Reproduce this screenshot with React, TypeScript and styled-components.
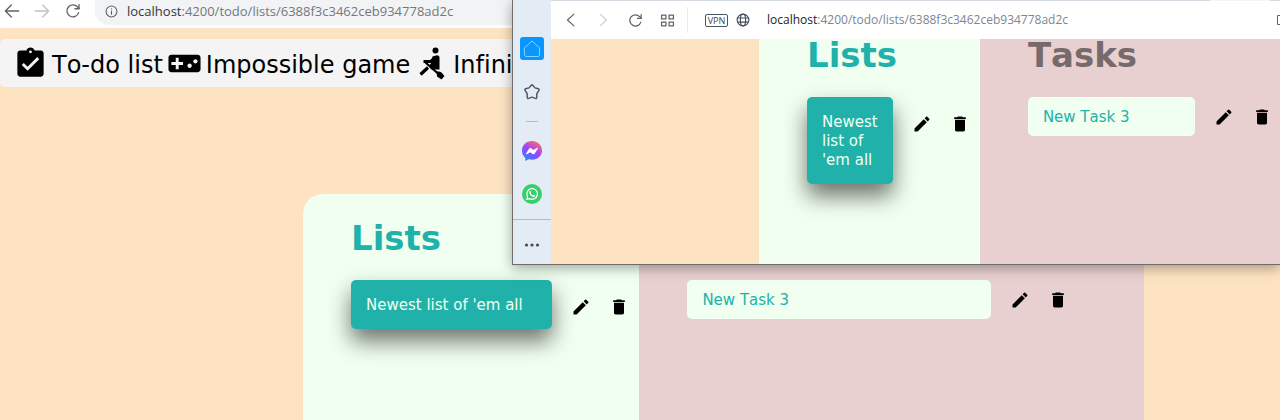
import React from "react";
import styled, { createGlobalStyle } from "styled-components";
import {
  MdAssignmentTurnedIn,
  MdDelete,
  MdEdit,
  MdVideogameAsset,
} from "react-icons/md";

const GlobalStyle = createGlobalStyle`
  *, *::before, *::after { box-sizing: border-box; }
  body {
    margin: 0;
    background: #fee3c3;
    font-family: "DejaVu Sans", Verdana, sans-serif;
    font-kerning: none;
    font-variant-ligatures: none;
  }
  button { border: 0; padding: 0; margin: 0; background: none; color: inherit; font: inherit; font-kerning: none; cursor: pointer; }
  svg { display: block; }
`;

const Desktop = styled.div`
  position: relative;
  min-height: 100vh;
  overflow: hidden;
  display: flex;
  flex-direction: column;
`;

const BackToolbar = styled.header`
  display: flex;
  align-items: flex-start;
  height: 28px;
  background: #fff;
`;

const BackControls = styled.div`
  display: flex;
  width: 95px;
  height: 22px;
  align-items: center;
`;

const ToolButton = styled.button<{ $w: number; $color?: string }>`
  display: flex;
  align-items: center;
  justify-content: center;
  flex: none;
  width: ${(p) => p.$w}px;
  height: 22px;
  color: ${(p) => p.$color ?? "#5f6368"};
`;

const BackAddress = styled.div`
  display: flex;
  flex: 1;
  align-items: center;
  gap: 9px;
  height: 25px;
  padding: 0 10px 3px;
  border-radius: 0 0 0 14px;
  background: #f1f3f4;
  color: #5f6368;
`;

const Url = styled.div<{ $size: number; $host: string; $path: string }>`
  font-family: "Open Sans", "Noto Sans", sans-serif;
  font-size: ${(p) => p.$size}px;
  line-height: 20px;
  white-space: nowrap;
  color: ${(p) => p.$path};
  span { color: ${(p) => p.$host}; }
`;

const Nav = styled.nav`
  display: flex;
  align-items: center;
  gap: 4px;
  height: 48px;
  margin-top: 11px;
  padding: 0 13px;
  border-radius: 5px;
  background: #f4f4f4;
`;

const NavLink = styled.a`
  display: flex;
  align-items: center;
  gap: 4px;
  color: #000;
  font-size: 24px;
  line-height: 32px;
  text-decoration: none;
  white-space: nowrap;
  span { padding-top: 3px; }
`;

const BackBoard = styled.main`
  display: grid;
  flex: 1;
  grid-template-columns: minmax(0, 2fr) minmax(0, 3fr);
  margin: 107px 136px 0 303px;
  border-radius: 20px 20px 0 0;
  overflow: hidden;
`;

const FrontBoard = styled.main`
  display: grid;
  flex: 1;
  grid-template-columns: minmax(0, 3fr) minmax(0, 5fr);
  margin: -28px -68px 0 208px;
`;

const ListsPanel = styled.section`
  padding: 23px 1px 23px 48px;
  background: #f0fff0;
`;

const TasksPanel = styled.section`
  padding: 23px 67px 23px 48px;
  background: #e8d0d0;
`;

const Heading = styled.h1<{ $color: string }>`
  margin: 0 0 21px;
  color: ${(p) => p.$color};
  font-size: 34px;
  font-weight: 700;
  line-height: 42px;
`;

const Row = styled.div`
  display: flex;
  align-items: flex-start;
`;

const Card = styled.button<{ $active?: boolean }>`
  && {
    flex: 1;
    min-width: 0;
    margin-right: 10px;
    padding: ${(p) => (p.$active ? "16px 10px 14px 15px" : "11px 15px 9px")};
    border-radius: 5px;
    background: ${(p) => (p.$active ? "#20b2aa" : "#f0fff0")};
    color: ${(p) => (p.$active ? "#f0fff0" : "#20b2aa")};
    box-shadow: ${(p) => (p.$active ? "0 12px 22px rgba(0, 0, 0, 0.55)" : "none")};
    font-size: 15px;
    line-height: 19px;
    text-align: left;
  }
`;

const IconButton = styled.button<{ $tall?: boolean }>`
  display: flex;
  flex: none;
  align-items: center;
  justify-content: center;
  width: 38px;
  height: ${(p) => (p.$tall ? 54 : 39)}px;
  color: #000;
`;

const FrontWindow = styled.div`
  position: absolute;
  top: 0;
  right: 0;
  left: 40%;
  display: flex;
  height: 265px;
  border: solid #706c6c;
  border-width: 0 0 1px 1px;
  background: #fee3c3;
  box-shadow: 0 3px 12px rgba(0, 0, 0, 0.35);
`;

const Sidebar = styled.aside`
  display: flex;
  flex: none;
  flex-direction: column;
  align-items: center;
  width: 38px;
  padding-top: 37px;
  background: #e3ecf5;
`;

const SideButton = styled.button<{ $active?: boolean; $gap?: number }>`
  && {
    display: flex;
    flex: none;
    align-items: center;
    justify-content: center;
    width: 24px;
    height: 23px;
    margin-bottom: ${(p) => p.$gap ?? 0}px;
    border-radius: 3px;
    background: ${(p) => (p.$active ? "#0a96ff" : "none")};
    color: ${(p) => (p.$active ? "#9fe0ff" : "#4f5966")};
  }
`;

const ShortRule = styled.hr`
  width: 12px;
  margin: 0 0 17px;
  border: 0;
  border-top: 1px solid #b4bcc5;
`;

const SideFooter = styled.div`
  display: flex;
  flex: 1;
  align-items: center;
  justify-content: center;
  align-self: stretch;
  padding-top: 6px;
  border-top: 1px solid #b2bac4;
`;

const FrontContent = styled.div`
  display: flex;
  flex: 1;
  flex-direction: column;
  min-width: 0;
`;

const TabStrip = styled.div`
  display: flex;
  flex: none;
  justify-content: flex-end;
  height: 1px;
  padding-right: 10px;
  background: #d3dae1;
`;

const TabEdge = styled.div`
  width: 60px;
  background: #f2f5f8;
`;

const FrontToolbar = styled.header`
  display: flex;
  flex: none;
  align-items: center;
  height: 38px;
  padding-left: 4px;
  background: #fff;
  overflow: hidden;
`;

const Separator = styled.div`
  width: 1px;
  height: 26px;
  margin: 0 17px 0 3px;
  background: #e9ebed;
`;

const VpnBadge = styled.button`
  && {
    width: 23px;
    height: 13px;
    border: 1px solid #4b5563;
    border-radius: 2px;
    color: #3c4552;
    font-family: "Open Sans", sans-serif;
    font-size: 9px;
    font-weight: 400;
    line-height: 11px;
    text-align: center;
  }
`;

const AddressFill = styled.div`
  flex: 1;
  min-width: 0;
  padding-left: 9px;
`;

const Viewport = styled.div`
  display: flex;
  flex: 1;
  min-height: 0;
  overflow: hidden;
`;

const Stroke = ({ size, w = 2, children }: { size: number; w?: number; children: React.ReactNode }) => (
  <svg width={size} height={size} viewBox="0 0 24 24" fill="none" stroke="currentColor" strokeWidth={w} strokeLinecap="round" strokeLinejoin="round" aria-hidden="true">
    {children}
  </svg>
);

const Reload = ({ size, w }: { size: number; w: number }) => (
  <Stroke size={size} w={w}>
    <path d="M20.5 14.5A9 9 0 1 1 18.5 5.7L21 8.2" />
    <path d="M21 2.5V8.6H15" />
  </Stroke>
);

const Rower = () => (
  <svg width="35" height="35" viewBox="0 0 35 35" fill="none" stroke="#000" aria-hidden="true">
    <circle cx="21.500" cy="4.500" r="3" fill="#000" stroke="none" />
    <path d="M18.500 10.500 23 9.200q2.500 0 2.500 2.500V23.500h-8l-2.500-3.500 2.500-3.500Z" fill="#000" stroke="none" />
    <path d="M21 11.500 17 15.500H9.500" strokeWidth="3.200" />
    <path d="M6.500 28.500 14 21.500" strokeWidth="3.200" />
    <path d="M11.500 16.500 24.500 28" strokeWidth="2.200" />
    <path d="M22.500 25.500q3.500-.5 5 1l3 3.500-3 3.500-4.500-3Z" fill="#000" stroke="none" />
  </svg>
);

const Messenger = () => (
  <svg width="20" height="20" viewBox="0 0 24 24" aria-hidden="true">
    <defs>
      <linearGradient id="messenger" x1="0.2" y1="1" x2="0.75" y2="0">
        <stop offset="0" stopColor="#1e8cff" />
        <stop offset="0.5" stopColor="#9a42ff" />
        <stop offset="1" stopColor="#ff6a70" />
      </linearGradient>
    </defs>
    <path fill="url(#messenger)" d="M12 0C5.2 0 0 5 0 11.6c0 3.600 1.500 6.600 4 8.700V24l3.900-2.100c1.300.4 2.700.6 4.100.6 6.800 0 12-4.700 12-11S18.800 0 12 0Z" />
    <path fill="#fff" d="m4.800 15 3.600-5.700c.6-.9 1.700-1.100 2.600-.5l2.800 2.100 3.900-2.500c.7-.5 1.600.3 1.100 1l-3.500 5.600c-.6.9-1.800 1.100-2.600.5l-2.800-2.100-4 2.600c-.7.4-1.500-.3-1.100-1Z" />
  </svg>
);

const WhatsApp = () => (
  <svg width="20" height="20" viewBox="0 0 24 24" aria-hidden="true">
    <circle cx="12" cy="12" r="12" fill="#35cf6b" />
    <path d="m5.700 18.400.9-3.300a6.400 6.400 0 1 1 2.400 2.400Z" fill="none" stroke="#fff" strokeWidth="1.500" strokeLinejoin="round" />
    <path d="M9.200 8.500c.4-.4.9-.3 1.100.1l.6 1.400c.1.400-.5.900-.5 1.200.5 1.100 1.400 1.900 2.500 2.300.3 0 .8-.9 1.200-.7l1.500.8c.5.3 0 1.500-.6 1.800-2.700 1.300-7.500-3.500-5.800-6.900Z" fill="#fff" />
  </svg>
);

const Address = ({ size, host, path }: { size: number; host: string; path: string }) => (
  <Url $size={size} $host={host} $path={path} role="textbox" aria-label="Address" tabIndex={0}>
    <span>localhost</span>:4200/todo/lists/6388f3c3462ceb934778ad2c
  </Url>
);

const ItemRow = ({ label, active }: { label: string; active?: boolean }) => (
  <Row>
    <Card $active={active}>{label}</Card>
    <IconButton $tall={active} aria-label={`Edit ${label}`}><MdEdit size={20} /></IconButton>
    <IconButton $tall={active} aria-label={`Delete ${label}`}><MdDelete size={20} /></IconButton>
  </Row>
);

const Lists = () => (
  <ListsPanel>
    <Heading $color="#20b2aa">Lists</Heading>
    <ItemRow label="Newest list of 'em all" active />
  </ListsPanel>
);

const Tasks = () => (
  <TasksPanel>
    <Heading $color="#776a6b">Tasks</Heading>
    <ItemRow label="New Task 3" />
  </TasksPanel>
);

export default function App() {
  return (
    <Desktop>
      <GlobalStyle />
      <BackToolbar>
        <BackControls>
          <ToolButton $w={23} aria-label="Back"><Stroke size={16}><path d="M22 12H3M11 3 2 12l9 9" /></Stroke></ToolButton>
          <ToolButton $w={38} $color="#bfc2c5" aria-label="Forward"><Stroke size={16}><path d="M2 12h19M13 3l9 9-9 9" /></Stroke></ToolButton>
          <ToolButton $w={24} aria-label="Reload"><Reload size={16} w={2} /></ToolButton>
        </BackControls>
        <BackAddress>
          <Stroke size={13}><circle cx="12" cy="12" r="10" /><path d="M12 11v6M12 7v.2" /></Stroke>
          <Address size={13} host="#34373b" path="#74787d" />
        </BackAddress>
      </BackToolbar>
      <Nav>
        <NavLink href="#todo"><MdAssignmentTurnedIn size={35} /><span>To-do list</span></NavLink>
        <NavLink href="#impossible"><MdVideogameAsset size={35} /><span>Impossible game</span></NavLink>
        <NavLink href="#infinite"><Rower /><span>Infinite runner</span></NavLink>
      </Nav>
      <BackBoard>
        <Lists />
        <Tasks />
      </BackBoard>

      <FrontWindow>
        <Sidebar>
          <SideButton $active $gap={20} aria-label="Home">
            <Stroke size={20} w={1}><path d="M3 10.500 12 2.500l9 8v8.500q0 2-2 2H5q-2 0-2-2Z" /></Stroke>
          </SideButton>
          <SideButton $gap={18} aria-label="Bookmarks">
            <Stroke size={18} w={2}><path d="M11 3q1-1.500 2 0l3 3.500 4.500 1.200q1.500.6.700 2L18.500 14.100l-.2 5.200q-.2 1.500-1.800 1.200L12 18.800l-4.500 1.700q-1.600.3-1.800-1.200L5.500 14.100 2.800 9.700q-.8-1.400.7-2L8 6.500Z" /></Stroke>
          </SideButton>
          <ShortRule />
          <SideButton $gap={20} aria-label="Messenger"><Messenger /></SideButton>
          <SideButton $gap={14} aria-label="WhatsApp"><WhatsApp /></SideButton>
          <SideFooter>
            <SideButton aria-label="More">
              <svg width="16" height="4" viewBox="0 0 16 4" fill="#414953" aria-hidden="true">
                <circle cx="2.500" cy="2" r="1.600" /><circle cx="8" cy="2" r="1.600" /><circle cx="13.500" cy="2" r="1.600" />
              </svg>
            </SideButton>
          </SideFooter>
        </Sidebar>
        <FrontContent>
          <TabStrip><TabEdge /></TabStrip>
          <FrontToolbar>
            <ToolButton $w={32} aria-label="Back"><Stroke size={14}><path d="m17 2-11 10 11 10" /></Stroke></ToolButton>
            <ToolButton $w={32} $color="#ccd0d4" aria-label="Forward"><Stroke size={14}><path d="m7 2 11 10L7 22" /></Stroke></ToolButton>
            <ToolButton $w={32} aria-label="Reload"><Reload size={15} w={2} /></ToolButton>
            <ToolButton $w={33} aria-label="Speed dial">
              <Stroke size={15}><path d="M2.500 3.500h7v6h-7ZM14.500 3.500h7v6h-7ZM2.500 14.500h7v6h-7ZM14.500 14.500h7v6h-7Z" /></Stroke>
            </ToolButton>
            <Separator />
            <VpnBadge>VPN</VpnBadge>
            <ToolButton $w={30} $color="#48515e" aria-label="Site information">
              <Stroke size={14}><circle cx="12" cy="12" r="10" /><ellipse cx="12" cy="12" rx="4.500" ry="10" /><path d="M3 8.500h18M3 15.500h18" /></Stroke>
            </ToolButton>
            <AddressFill><Address size={12} host="#20242a" path="#7c8692" /></AddressFill>
            <ToolButton $w={4} aria-label="Snapshot">
              <svg width="4" height="12" viewBox="0 0 4 12" fill="none" stroke="currentColor" aria-hidden="true"><path d="M4 1.500H1.500v9H4" /></svg>
            </ToolButton>
          </FrontToolbar>
          <Viewport>
            <FrontBoard>
              <Lists />
              <Tasks />
            </FrontBoard>
          </Viewport>
        </FrontContent>
      </FrontWindow>
    </Desktop>
  );
}
